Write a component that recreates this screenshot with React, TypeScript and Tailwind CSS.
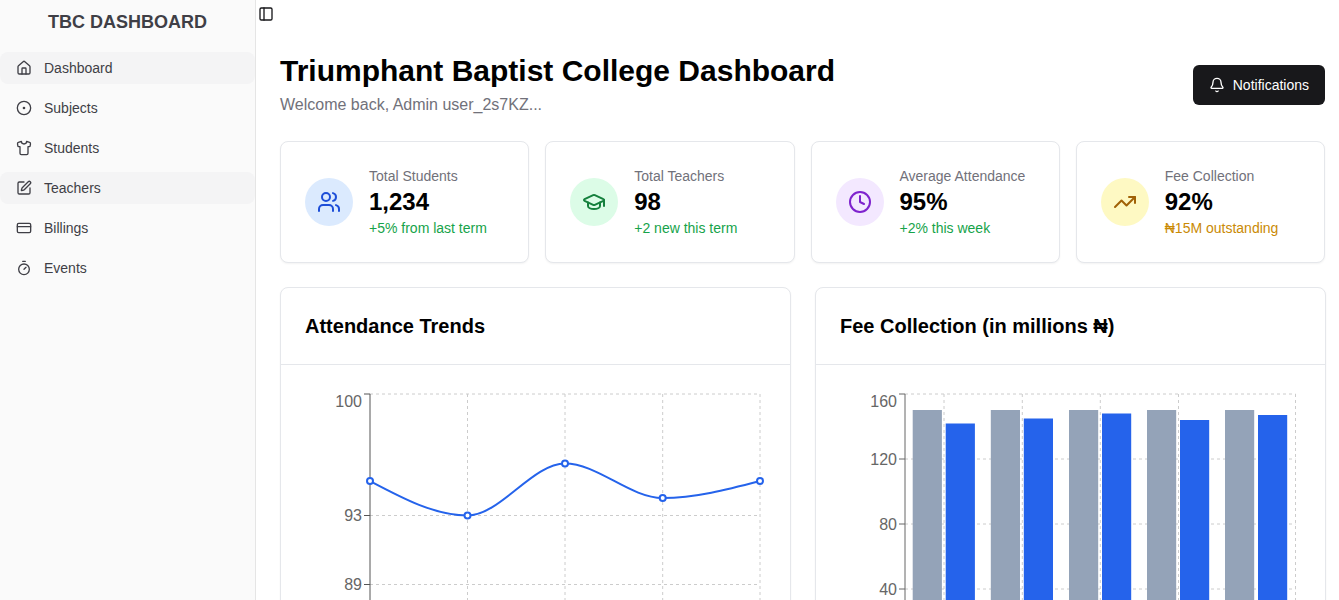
import type { ReactNode } from "react";
import {
  Bell,
  CircleDot,
  Clock,
  CreditCard,
  GraduationCap,
  House,
  PanelLeft,
  Shirt,
  SquarePen,
  Timer,
  TrendingUp,
  Users,
} from "lucide-react";

const navItems = [
  { label: "Dashboard", icon: House, active: true },
  { label: "Subjects", icon: CircleDot },
  { label: "Students", icon: Shirt },
  { label: "Teachers", icon: SquarePen, active: true },
  { label: "Billings", icon: CreditCard },
  { label: "Events", icon: Timer },
];

const stats = [
  {
    label: "Total Students",
    value: "1,234",
    note: "+5% from last term",
    noteClass: "text-[#16a34a]",
    circleClass: "bg-[#dbeafe]",
    iconClass: "text-[#1d4ed8]",
    icon: Users,
  },
  {
    label: "Total Teachers",
    value: "98",
    note: "+2 new this term",
    noteClass: "text-[#16a34a]",
    circleClass: "bg-[#dcfce7]",
    iconClass: "text-[#15803d]",
    icon: GraduationCap,
  },
  {
    label: "Average Attendance",
    value: "95%",
    note: "+2% this week",
    noteClass: "text-[#16a34a]",
    circleClass: "bg-[#f3e8ff]",
    iconClass: "text-[#7e22ce]",
    icon: Clock,
  },
  {
    label: "Fee Collection",
    value: "92%",
    note: "₦15M outstanding",
    noteClass: "text-[#ca8a04]",
    circleClass: "bg-[#fef9c3]",
    iconClass: "text-[#a16207]",
    icon: TrendingUp,
  },
];

const bars = [
  { gray: 912.7, blue: 945.7, top: 423.5 },
  { gray: 990.8, blue: 1023.8, top: 418.5 },
  { gray: 1069, blue: 1102, top: 413.5 },
  { gray: 1147, blue: 1180, top: 420 },
  { gray: 1225, blue: 1258, top: 415 },
];

function Sidebar() {
  return (
    <aside className="flex w-[256px] shrink-0 flex-col border-r border-[#e5e5e5] bg-[#fafafa]">
      <h2 className="mt-[10px] h-[42px] text-center text-[18px] leading-[24px] font-bold text-[#3f3f46]">
        TBC DASHBOARD
      </h2>
      <nav className="flex flex-col gap-2">
        {navItems.map((item) => (
          <div
            key={item.label}
            className={`flex h-8 items-center gap-3 rounded-lg pl-4 text-sm text-[#3f3f46] ${
              item.active ? "bg-[#f4f4f5]" : ""
            }`}
          >
            <item.icon size={16} strokeWidth={2} />
            <span>{item.label}</span>
          </div>
        ))}
      </nav>
    </aside>
  );
}

function StatCard({ stat }: { stat: (typeof stats)[number] }) {
  return (
    <div className="flex flex-1 items-center gap-4 rounded-lg border border-[#e5e7eb] bg-white p-6 shadow-[0_1px_2px_0_rgba(0,0,0,0.05)]">
      <div
        className={`flex h-12 w-12 shrink-0 items-center justify-center rounded-full ${stat.circleClass}`}
      >
        <stat.icon size={24} strokeWidth={2} className={stat.iconClass} />
      </div>
      <div>
        <p className="text-sm text-[#71717a]">{stat.label}</p>
        <p className="text-2xl font-bold text-black">{stat.value}</p>
        <p className={`text-sm ${stat.noteClass}`}>{stat.note}</p>
      </div>
    </div>
  );
}

function ChartCard({ title, children }: { title: string; children: ReactNode }) {
  return (
    <div className="flex-1 rounded-lg border border-[#e5e7eb] bg-white shadow-[0_1px_2px_0_rgba(0,0,0,0.05)]">
      <div className="border-b border-[#e5e7eb] p-6">
        <h3 className="text-xl leading-7 font-bold text-black">{title}</h3>
      </div>
      {children}
    </div>
  );
}

function AttendanceChart() {
  const xs = [467.5, 565, 662.7, 760];
  const points = [
    [370, 481],
    [467.5, 515.5],
    [565, 463.5],
    [662.7, 498],
    [760, 481],
  ];

  return (
    <svg className="block h-[300px] w-[509px]" viewBox="281 365 509 300">
      <g stroke="#ccc" strokeDasharray="3 3" fill="none">
        {[394, 515.5, 584.5].map((y) => (
          <line key={y} x1={370} x2={760} y1={y} y2={y} />
        ))}
        {xs.map((x) => (
          <line key={x} x1={x} x2={x} y1={394} y2={665} />
        ))}
      </g>
      <g stroke="#555" fill="none">
        <line x1={370} x2={370} y1={394} y2={665} />
        <line x1={364} x2={370} y1={394} y2={394} />
        <line x1={364} x2={370} y1={515.5} y2={515.5} />
        <line x1={364} x2={370} y1={584.5} y2={584.5} />
      </g>
      <g fill="#666" fontSize={16} textAnchor="end">
        <text x={362} y={407}>100</text>
        <text x={362} y={521}>93</text>
        <text x={362} y={590}>89</text>
      </g>
      <path
        d="M370 481C402.5 498.2 435 515.5 467.5 515.5C500 515.5 532.5 463.5 565 463.5C597.5 463.5 630 498 662.7 498C695 498 727.6 489.5 760 481"
        fill="none"
        stroke="#2563eb"
        strokeWidth={2}
      />
      {points.map(([x, y]) => (
        <circle key={x} cx={x} cy={y} r={3} fill="#fff" stroke="#2563eb" strokeWidth={2} />
      ))}
    </svg>
  );
}

function FeeChart() {
  return (
    <svg className="block h-[300px] w-[509px]" viewBox="816 365 509 300">
      <g stroke="#ccc" strokeDasharray="3 3" fill="none">
        {[394, 459, 524, 589].map((y) => (
          <line key={y} x1={905} x2={1295.5} y1={y} y2={y} />
        ))}
        {[944, 1022.3, 1100.3, 1178.5, 1295.5].map((x) => (
          <line key={x} x1={x} x2={x} y1={394} y2={665} />
        ))}
      </g>
      <g stroke="#666" fill="none">
        <line x1={905} x2={905} y1={394} y2={665} />
        {[394, 459, 524, 589].map((y) => (
          <line key={y} x1={899} x2={905} y1={y} y2={y} />
        ))}
      </g>
      <g fill="#666" fontSize={16} textAnchor="end">
        <text x={897} y={407}>160</text>
        <text x={897} y={465}>120</text>
        <text x={897} y={530}>80</text>
        <text x={897} y={595}>40</text>
      </g>
      {bars.map((bar) => (
        <g key={bar.gray}>
          <rect x={bar.gray} y={410} width={29.2} height={260} fill="#94a3b8" />
          <rect x={bar.blue} y={bar.top} width={29.2} height={260} fill="#2563eb" />
        </g>
      ))}
    </svg>
  );
}

export default function App() {
  return (
    <div className="flex h-[600px] overflow-hidden bg-white font-['Liberation_Sans',Arial,sans-serif]">
      <Sidebar />
      <main className="min-w-0 flex-1">
        <div className="flex h-[53px] items-start pt-[6px] pl-[2px]">
          <PanelLeft size={16} strokeWidth={2} className="text-[#18181b]" />
        </div>
        <div className="pr-[14px] pl-6">
          <div className="flex items-center justify-between">
            <div>
              <h1 className="text-3xl font-bold text-black">Triumphant Baptist College Dashboard</h1>
              <p className="mt-1 text-base text-[#71717a]">Welcome back, Admin user_2s7KZ...</p>
            </div>
            <button
              type="button"
              className="flex h-10 items-center gap-2 rounded-md bg-[#18181b] px-4 text-sm font-medium text-white"
            >
              <Bell size={16} strokeWidth={2} />
              Notifications
            </button>
          </div>
          <div className="mt-6 flex gap-4">
            {stats.map((stat) => (
              <StatCard key={stat.label} stat={stat} />
            ))}
          </div>
          <div className="mt-6 flex gap-6">
            <ChartCard title="Attendance Trends">
              <AttendanceChart />
            </ChartCard>
            <ChartCard title="Fee Collection (in millions ₦)">
              <FeeChart />
            </ChartCard>
          </div>
        </div>
      </main>
    </div>
  );
}
